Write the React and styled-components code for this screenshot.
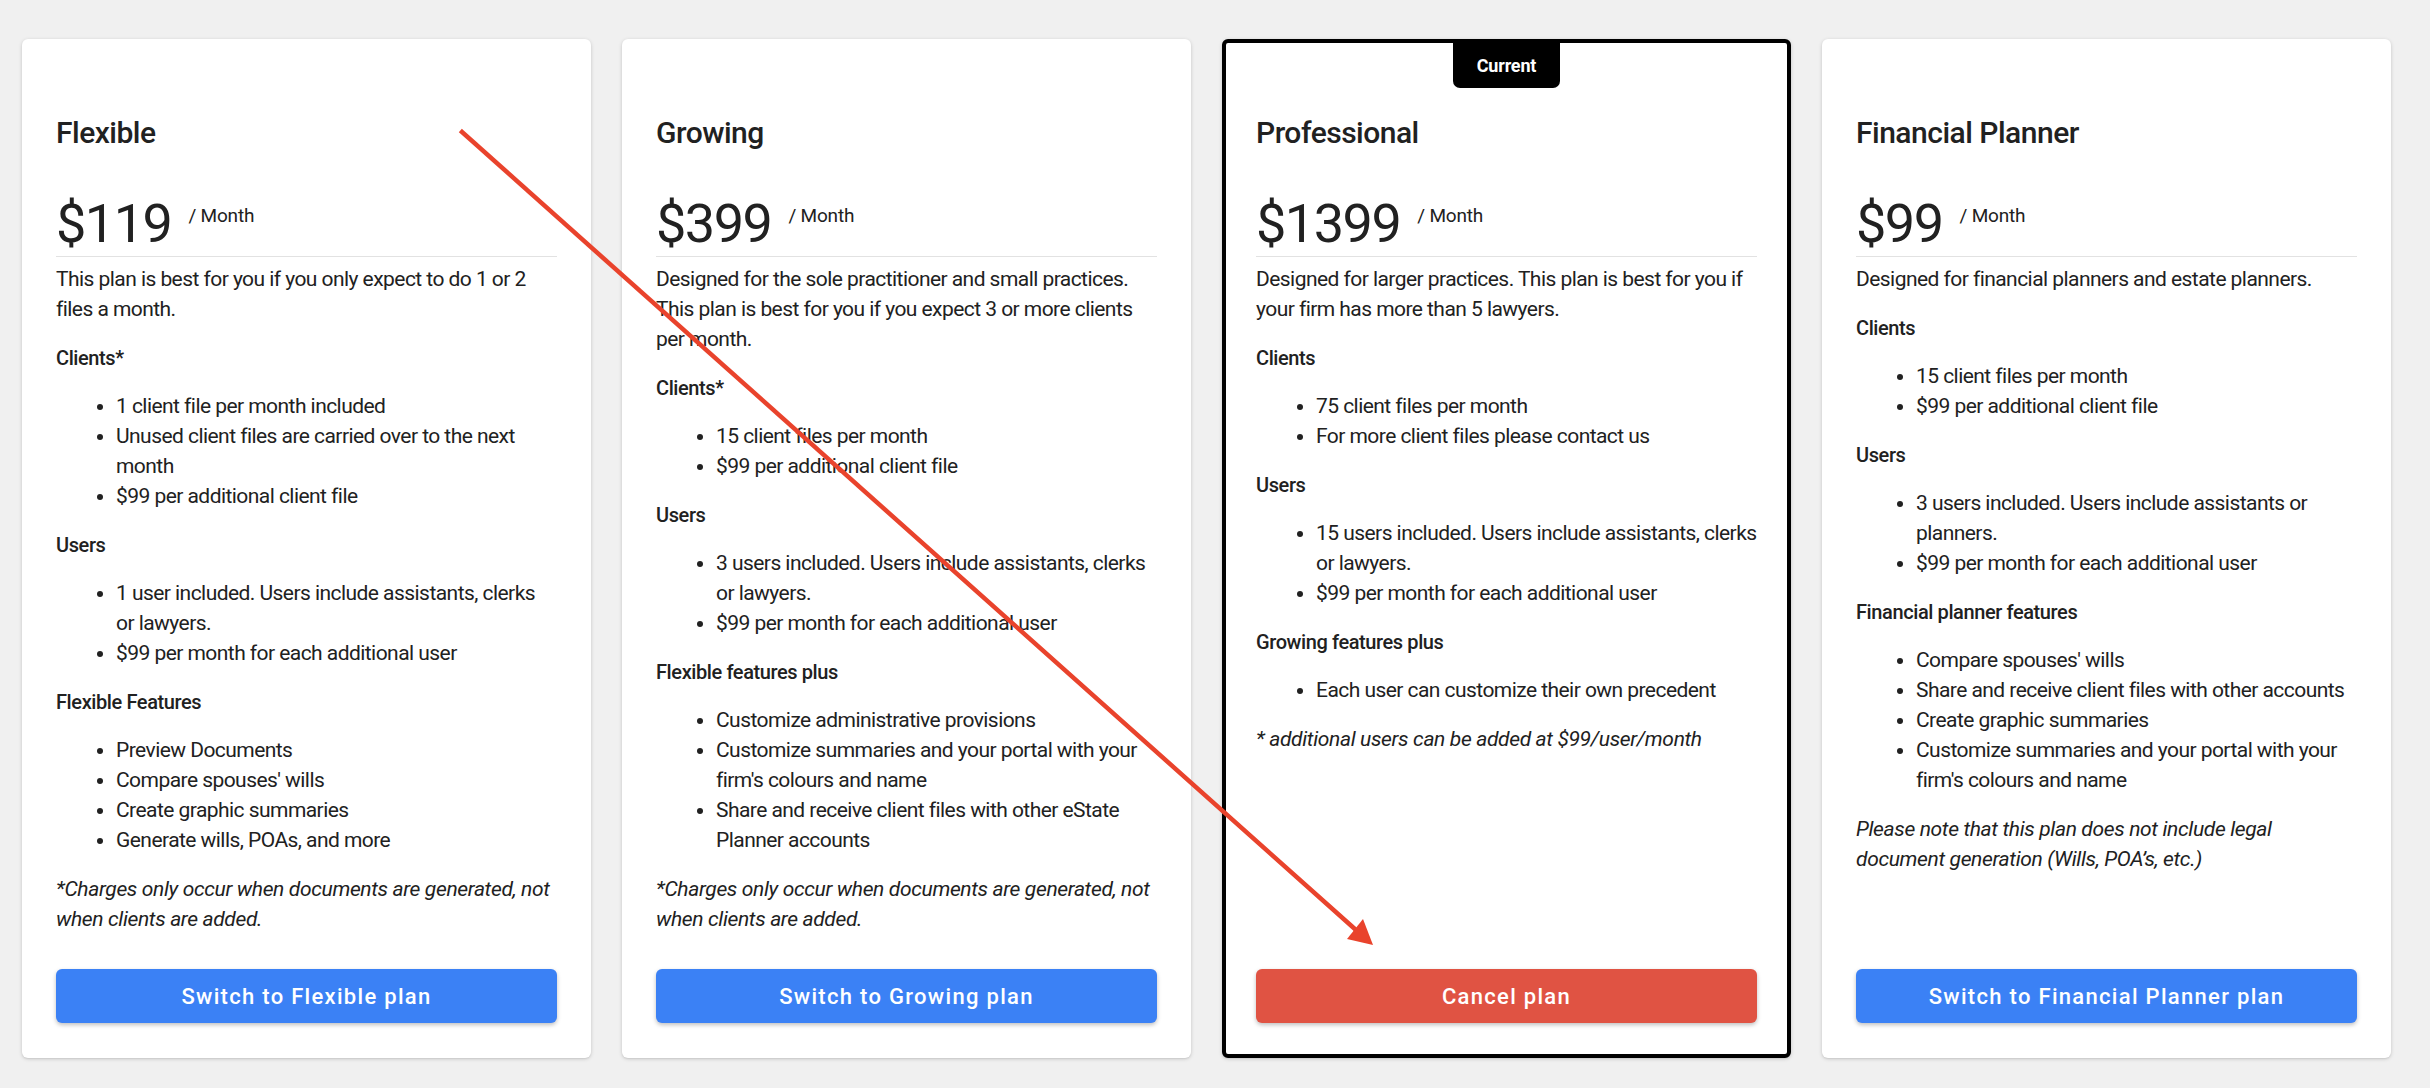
import React from "react";
import styled, { createGlobalStyle } from "styled-components";

const GlobalStyle = createGlobalStyle`
  html, body {
    margin: 0;
    padding: 0;
    background: #f0f0f0;
  }
  body {
    font-family: Roboto, "Liberation Sans", Arial, sans-serif;
    color: #212121;
  }
  * { box-sizing: border-box; }
`;

const Page = styled.div`
  position: relative;
  width: 2430px;
  height: 1088px;
  overflow: hidden;
  background: #f0f0f0;
  padding: 39px 0 0 22px;
`;

const CardRow = styled.div`
  display: flex;
  gap: 31px;
  align-items: stretch;
  height: 1019px;
`;

const Card = styled.section`
  width: 569px;
  flex: 0 0 569px;
  display: flex;
  flex-direction: column;
  background: #fff;
  border: 4px solid ${(p) => (p.$current ? "#000" : "transparent")};
  border-radius: 6px;
  box-shadow: 0 1px 4px rgba(0, 0, 0, 0.14), 0 1px 2px rgba(0, 0, 0, 0.08);
  padding: 0 30px 31px;
`;

const TabSlot = styled.div`
  height: 45px;
  flex: 0 0 45px;
  display: flex;
  justify-content: center;
`;

const CurrentTab = styled.div`
  width: 107px;
  height: 45px;
  background: #000;
  color: #fff;
  border-radius: 0 0 7px 7px;
  display: flex;
  align-items: center;
  justify-content: center;
  font-size: 18px;
  font-weight: 700;
  letter-spacing: -0.2px;
`;

const Title = styled.h2`
  margin: 27px 0 0;
  font-size: 30px;
  line-height: 36px;
  font-weight: 500;
  letter-spacing: -0.5px;
  color: #212121;
`;

const PriceRow = styled.div`
  margin-top: 41px;
  display: flex;
  align-items: flex-start;
  gap: 17px;
  border-bottom: 1px solid #e2e2e2;
`;

const Price = styled.span`
  font-size: 54px;
  line-height: 64px;
  font-weight: 400;
  letter-spacing: -1.5px;
  color: #212121;
`;

const Per = styled.span`
  font-size: 19px;
  line-height: 22px;
  margin-top: 13px;
  letter-spacing: -0.2px;
  color: #212121;
`;

const Body = styled.div`
  margin-top: 7px;
  display: flex;
  flex-direction: column;
  gap: 18.5px;
  font-size: 21px;
  line-height: 30px;
  letter-spacing: -0.55px;
`;

const Text = styled.p`
  margin: 0;
  font-style: ${(p) => (p.$italic ? "italic" : "normal")};
  letter-spacing: ${(p) => (p.$italic ? "-0.35px" : "inherit")};
`;

const Heading = styled.p`
  margin: 0;
  font-size: 20px;
  font-weight: 500;
  letter-spacing: -0.4px;
`;

const List = styled.ul`
  margin: 0;
  padding-left: 60px;
`;

const ActionButton = styled.button`
  margin-top: auto;
  height: 54px;
  width: 100%;
  border: none;
  border-radius: 6px;
  background: ${(p) => (p.$danger ? "#e05343" : "#3b81f5")};
  color: #fff;
  font-family: Roboto, "Liberation Sans", Arial, sans-serif;
  font-size: 22px;
  font-weight: 500;
  letter-spacing: 1.3px;
  box-shadow: 0 2px 4px rgba(0, 0, 0, 0.25);
  cursor: pointer;
`;

const Annotation = styled.svg`
  position: absolute;
  left: 0;
  top: 0;
  pointer-events: none;
`;

const chargesNote =
  "*Charges only occur when documents are generated, not when clients are added.";

const plans = [
  {
    name: "Flexible",
    price: "$119",
    desc: "This plan is best for you if you only expect to do 1 or 2 files a month.",
    sections: [
      {
        title: "Clients*",
        items: [
          "1 client file per month included",
          "Unused client files are carried over to the next month",
          "$99 per additional client file",
        ],
      },
      {
        title: "Users",
        items: [
          "1 user included. Users include assistants, clerks or lawyers.",
          "$99 per month for each additional user",
        ],
      },
      {
        title: "Flexible Features",
        items: [
          "Preview Documents",
          "Compare spouses' wills",
          "Create graphic summaries",
          "Generate wills, POAs, and more",
        ],
      },
    ],
    note: chargesNote,
    action: "Switch to Flexible plan",
  },
  {
    name: "Growing",
    price: "$399",
    desc: "Designed for the sole practitioner and small practices. This plan is best for you if you expect 3 or more clients per month.",
    sections: [
      {
        title: "Clients*",
        items: ["15 client files per month", "$99 per additional client file"],
      },
      {
        title: "Users",
        items: [
          "3 users included. Users include assistants, clerks or lawyers.",
          "$99 per month for each additional user",
        ],
      },
      {
        title: "Flexible features plus",
        items: [
          "Customize administrative provisions",
          "Customize summaries and your portal with your firm's colours and name",
          "Share and receive client files with other eState Planner accounts",
        ],
      },
    ],
    note: chargesNote,
    action: "Switch to Growing plan",
  },
  {
    name: "Professional",
    price: "$1399",
    current: true,
    desc: "Designed for larger practices. This plan is best for you if your firm has more than 5 lawyers.",
    sections: [
      {
        title: "Clients",
        items: ["75 client files per month", "For more client files please contact us"],
      },
      {
        title: "Users",
        items: [
          "15 users included. Users include assistants, clerks or lawyers.",
          "$99 per month for each additional user",
        ],
      },
      {
        title: "Growing features plus",
        items: ["Each user can customize their own precedent"],
      },
    ],
    note: "* additional users can be added at $99/user/month",
    action: "Cancel plan",
    danger: true,
  },
  {
    name: "Financial Planner",
    price: "$99",
    desc: "Designed for financial planners and estate planners.",
    sections: [
      {
        title: "Clients",
        items: ["15 client files per month", "$99 per additional client file"],
      },
      {
        title: "Users",
        items: [
          "3 users included. Users include assistants or planners.",
          "$99 per month for each additional user",
        ],
      },
      {
        title: "Financial planner features",
        items: [
          "Compare spouses' wills",
          "Share and receive client files with other accounts",
          "Create graphic summaries",
          "Customize summaries and your portal with your firm's colours and name",
        ],
      },
    ],
    note: "Please note that this plan does not include legal document generation (Wills, POA\u2019s, etc.)",
    action: "Switch to Financial Planner plan",
  },
];

function PlanCard({ plan }) {
  return (
    <Card $current={plan.current}>
      <TabSlot>{plan.current && <CurrentTab>Current</CurrentTab>}</TabSlot>
      <Title>{plan.name}</Title>
      <PriceRow>
        <Price>{plan.price}</Price>
        <Per>/ Month</Per>
      </PriceRow>
      <Body>
        <Text>{plan.desc}</Text>
        {plan.sections.map((s) => (
          <React.Fragment key={s.title}>
            <Heading>{s.title}</Heading>
            <List>
              {s.items.map((it) => (
                <li key={it}>{it}</li>
              ))}
            </List>
          </React.Fragment>
        ))}
        <Text $italic>{plan.note}</Text>
      </Body>
      <ActionButton $danger={plan.danger}>{plan.action}</ActionButton>
    </Card>
  );
}

export default function App() {
  return (
    <>
      <GlobalStyle />
      <Page>
        <CardRow>
          {plans.map((p) => (
            <PlanCard key={p.name} plan={p} />
          ))}
        </CardRow>
        <Annotation width="2430" height="1088" viewBox="0 0 2430 1088">
          <line
            x1="462"
            y1="132"
            x2="1356"
            y2="930"
            stroke="#e9432c"
            strokeWidth="4.5"
            strokeLinecap="square"
          />
          <polygon points="1373,945 1347,939 1363,919" fill="#e9432c" />
        </Annotation>
      </Page>
    </>
  );
}
